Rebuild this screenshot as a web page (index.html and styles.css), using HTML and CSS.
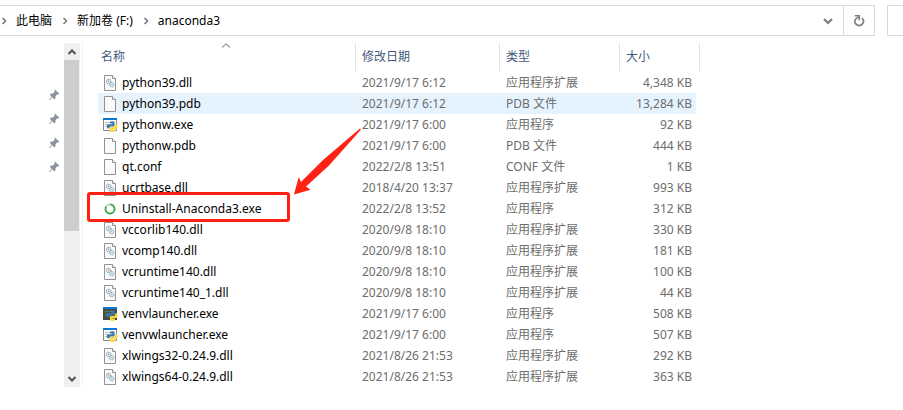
FILE: index.html
```
<!DOCTYPE html>
<html lang="zh-CN">
<head>
<meta charset="utf-8">
<title>anaconda3</title>
<link rel="stylesheet" href="styles.css">
</head>
<body>
<svg class="symbols" aria-hidden="true">
  <symbol id="page" viewBox="0 0 16 16">
    <path d="M2.500 .5H10.500L13.500 3.500V15.500H2.500Z" fill="#fafafa" stroke="#929292"/>
    <path d="M10.500 .5V3.500H13.500" fill="#fff" stroke="#929292"/>
  </symbol>
  <symbol id="dll" viewBox="0 0 16 16">
    <use href="#page"/>
    <circle cx="6.600" cy="6.500" r="2.200" fill="#eee" stroke="#9aa3a8" stroke-width="1.200" stroke-dasharray="1.200 .5"/>
    <circle cx="6.600" cy="6.500" r=".7" fill="#8e979c"/>
    <circle cx="9.600" cy="9.600" r="2.200" fill="#e3f1f9" stroke="#8fb2c6" stroke-width="1.200" stroke-dasharray="1.200 .5"/>
    <circle cx="9.600" cy="9.600" r=".7" fill="#83a9bf"/>
  </symbol>
  <symbol id="snake" viewBox="0 0 16 16">
    <path d="M8 5.500C8 4.500 9 4.300 10.300 4.300S12.600 4.600 12.600 5.600V8.200C12.600 9.200 12 9.600 11 9.600H8.800C7.700 9.600 7.400 10.400 7.400 11.600H6.300C5.200 11.600 4.800 10.500 4.800 9.300S5.300 7.200 6.400 7.200H10.300V6.600H8Z" fill="#3b78ab"/>
    <path d="M13.200 7.200H14C15.200 7.200 15.700 8.200 15.700 9.500S15.200 12 14 12H10.600V12.500H13V13.500C13 14.600 11.900 15 10.500 15S8 14.600 8 13.500V11.400C8 10.500 8.500 10.100 9.400 10.100H11.600C12.700 10.100 13.200 9.400 13.200 8.500Z" fill="#ffd83b"/>
  </symbol>
  <symbol id="pyw" viewBox="0 0 16 16">
    <path d="M1.500 1.500H14.500V13.500H1.500Z" fill="#fff" stroke="#888"/>
    <path d="M1 1H15V3H1Z" fill="#0878d0"/>
    <path d="M3 5.500H8M3 7.500H6M3 9.500H5" stroke="#bbb"/>
    <use href="#snake"/>
  </symbol>
  <symbol id="py" viewBox="0 0 16 16">
    <path d="M1 1H15V14H1Z" fill="#4a4a4a"/>
    <path d="M1 1H15V3H1Z" fill="#0878d0"/>
    <path d="M3 5.500H8M3 7.500H6M3 9.500H5" stroke="#42924a"/>
    <use href="#snake"/>
  </symbol>
  <symbol id="ring" viewBox="0 0 16 16">
    <circle cx="8" cy="8" r="4.600" fill="none" stroke="#a6d9a8" stroke-width="1.600"/>
    <path d="M8.500 3.400A4.600 4.600 0 1 1 4 5.700" fill="none" stroke="#36a944" stroke-width="1.700"/>
  </symbol>
  <symbol id="pin" viewBox="0 0 12 12">
    <path d="M7 .5L11.500 5L10.300 5.600L9.300 5.300L7.500 7.200L7.300 9.700L6.300 10.200L4.300 8.200L1 11.300L.6 11L3.700 7.600L1.800 5.700L2.400 4.700L4.900 4.500L6.700 2.700L6.300 1.600Z" fill="#87929c"/>
  </symbol>
  <symbol id="next" viewBox="0 0 6 8">
    <path d="M1.500 1L4.500 4L1.500 7" fill="none" stroke="#777" stroke-width="1.500"/>
  </symbol>
</svg>

<header class="toolbar">
  <nav class="address" aria-label="地址">
    <svg class="next"><use href="#next"/></svg>
    <a class="crumb" href="#">此电脑</a>
    <svg class="next"><use href="#next"/></svg>
    <a class="crumb" href="#">新加卷 (F:)</a>
    <svg class="next"><use href="#next"/></svg>
    <a class="crumb" href="#">anaconda3</a>
    <button class="history" aria-label="历史记录">
      <svg width="10" height="8" viewBox="0 0 10 8"><path d="M1 2L5 6L9 2" fill="none" stroke="#7a7a7a" stroke-width="2"/></svg>
    </button>
    <button class="refresh" aria-label="刷新">
      <svg width="12" height="12" viewBox="0 0 12 12"><path d="M9 3.200A4.200 4.200 0 1 1 2.500 4.200L5.500 1.800" fill="none" stroke="#808080" stroke-width="1.700"/><path d="M1.800 .8H6.300V5.300" fill="none" stroke="#808080" stroke-width="1.600"/></svg>
    </button>
  </nav>
  <input class="search" type="search" aria-label="搜索">
</header>

<main class="explorer">
  <aside class="pins" aria-label="快速访问">
    <svg class="pin"><use href="#pin"/></svg>
    <svg class="pin"><use href="#pin"/></svg>
    <svg class="pin"><use href="#pin"/></svg>
    <svg class="pin"><use href="#pin"/></svg>
  </aside>
  <div class="scrollbar">
    <button class="step" aria-label="向上滚动"><svg width="10" height="8" viewBox="0 0 10 8"><path d="M1.500 6L5 2.500L8.500 6" fill="none" stroke="#505050" stroke-width="2"/></svg></button>
    <div class="track"><div class="thumb"></div></div>
    <button class="step" aria-label="向下滚动"><svg width="10" height="8" viewBox="0 0 10 8"><path d="M1.500 2L5 5.500L8.500 2" fill="none" stroke="#505050" stroke-width="2"/></svg></button>
  </div>
  <section class="files">
    <table>
      <colgroup><col class="c-name"><col class="c-date"><col class="c-type"><col class="c-size"></colgroup>
      <thead>
        <tr><th>名称<svg class="sort" viewBox="0 0 10 5"><path d="M1 4.500L5 .8L9 4.500" fill="none" stroke="#666"/></svg></th><th>修改日期</th><th>类型</th><th>大小</th></tr>
      </thead>
      <tbody>
        <tr><td><svg class="icon"><use href="#dll"/></svg>python39.dll</td><td>2021/9/17 6:12</td><td>应用程序扩展</td><td>4,348 KB</td></tr>
        <tr class="hover"><td><svg class="icon"><use href="#page"/></svg>python39.pdb</td><td>2021/9/17 6:12</td><td>PDB 文件</td><td>13,284 KB</td></tr>
        <tr><td><svg class="icon"><use href="#pyw"/></svg>pythonw.exe</td><td>2021/9/17 6:00</td><td>应用程序</td><td>92 KB</td></tr>
        <tr><td><svg class="icon"><use href="#page"/></svg>pythonw.pdb</td><td>2021/9/17 6:00</td><td>PDB 文件</td><td>444 KB</td></tr>
        <tr><td><svg class="icon"><use href="#page"/></svg>qt.conf</td><td>2022/2/8 13:51</td><td>CONF 文件</td><td>1 KB</td></tr>
        <tr><td><svg class="icon"><use href="#dll"/></svg>ucrtbase.dll</td><td>2018/4/20 13:37</td><td>应用程序扩展</td><td>993 KB</td></tr>
        <tr><td><svg class="icon"><use href="#ring"/></svg>Uninstall-Anaconda3.exe</td><td>2022/2/8 13:52</td><td>应用程序</td><td>312 KB</td></tr>
        <tr><td><svg class="icon"><use href="#dll"/></svg>vccorlib140.dll</td><td>2020/9/8 18:10</td><td>应用程序扩展</td><td>330 KB</td></tr>
        <tr><td><svg class="icon"><use href="#dll"/></svg>vcomp140.dll</td><td>2020/9/8 18:10</td><td>应用程序扩展</td><td>181 KB</td></tr>
        <tr><td><svg class="icon"><use href="#dll"/></svg>vcruntime140.dll</td><td>2020/9/8 18:10</td><td>应用程序扩展</td><td>100 KB</td></tr>
        <tr><td><svg class="icon"><use href="#dll"/></svg>vcruntime140_1.dll</td><td>2020/9/8 18:10</td><td>应用程序扩展</td><td>44 KB</td></tr>
        <tr><td><svg class="icon"><use href="#py"/></svg>venvlauncher.exe</td><td>2021/9/17 6:00</td><td>应用程序</td><td>508 KB</td></tr>
        <tr><td><svg class="icon"><use href="#pyw"/></svg>venvwlauncher.exe</td><td>2021/9/17 6:00</td><td>应用程序</td><td>507 KB</td></tr>
        <tr><td><svg class="icon"><use href="#dll"/></svg>xlwings32-0.24.9.dll</td><td>2021/8/26 21:53</td><td>应用程序扩展</td><td>292 KB</td></tr>
        <tr><td><svg class="icon"><use href="#dll"/></svg>xlwings64-0.24.9.dll</td><td>2021/8/26 21:53</td><td>应用程序扩展</td><td>363 KB</td></tr>
      </tbody>
    </table>
    <div class="marker"></div>
    <svg class="arrow" viewBox="0 0 68 67" aria-hidden="true"><path d="M66 .5L67 1.500L35 37.500L12 58.500L16.500 61.800L0 66.500L4.700 49L7 54L29 32Z" fill="#ff2113"/></svg>
  </section>
</main>
</body>
</html>
```
FILE: styles.css
```
* {
  box-sizing: border-box;
}

body {
  margin: 0;
  background: #fff;
  color: #000;
  font: 12px/20px "Noto Sans", "Noto Sans CJK SC", sans-serif;
  overflow: hidden;
}

button {
  padding: 0;
  border: 0;
  background: none;
  display: flex;
  align-items: center;
  justify-content: center;
}

.symbols {
  position: absolute;
  width: 0;
  height: 0;
}

.toolbar {
  display: flex;
  gap: 12px;
  padding-top: 5px;
}

.address {
  flex: 1;
  display: flex;
  align-items: center;
  height: 31px;
  border: 1px solid #d9d9d9;
  border-left: 0;
}

.next {
  width: 6px;
  height: 8px;
  margin-left: 1px;
}

.crumb {
  margin: 0 9px;
  color: #000;
  text-decoration: none;
}

.history {
  width: 30px;
  height: 29px;
  margin-left: auto;
}

.refresh {
  width: 31px;
  height: 29px;
  border-left: 1px solid #d9d9d9;
}

.search {
  width: 16px;
  height: 31px;
  padding: 0;
  border: 1px solid #d9d9d9;
  border-right: 0;
  border-radius: 0;
  appearance: none;
}

.explorer {
  display: flex;
  padding-top: 7px;
}

.pins {
  width: 64px;
  display: flex;
  flex-direction: column;
  align-items: flex-end;
  gap: 12px;
  padding: 46px 4px 0 0;
}

.pin {
  width: 12px;
  height: 12px;
}

.scrollbar {
  width: 16px;
  display: flex;
  flex-direction: column;
  background: #f0f0f0;
}

.step {
  height: 17px;
}

.track {
  flex: 1;
}

.thumb {
  width: 15px;
  height: 55%;
  background: #cdcdcd;
}

.files {
  position: relative;
  flex: 1;
  margin-left: 2px;
  padding-left: 15px;
  border-left: 1px solid #f3f3f3;
}

table {
  width: 602px;
  table-layout: fixed;
  border-spacing: 0;
}

.c-name {
  width: 258px;
}

.c-date {
  width: 144px;
}

.c-type {
  width: 120px;
}

.c-size {
  width: 80px;
}

th {
  position: relative;
  height: 29px;
  padding: 0 6px;
  border-right: 1px solid #e2e2e2;
  border-bottom: 2px solid #fff;
  color: #44597a;
  font-weight: 400;
  text-align: left;
}

th:first-child {
  padding-left: 3px;
}

.sort {
  position: absolute;
  top: 0;
  left: calc(50% - 6px);
  width: 10px;
  height: 5px;
}

td {
  height: 21px;
  padding: 0 6px;
  color: #6d6d6d;
  white-space: nowrap;
}

td:first-child {
  padding-left: 4px;
  color: #000;
}

td:last-child {
  padding-right: 4px;
  border-right: 4px solid #fff;
  text-align: right;
}

.hover td {
  background: #e5f3ff;
}

.icon {
  width: 16px;
  height: 16px;
  margin-right: 4px;
  vertical-align: middle;
}

.marker {
  position: absolute;
  top: 149px;
  left: 4px;
  width: 203px;
  height: 30px;
  border: 3px solid #ff2113;
  border-radius: 3px;
}

.arrow {
  position: absolute;
  top: 85px;
  left: 211px;
  width: 68px;
  height: 67px;
}
```
